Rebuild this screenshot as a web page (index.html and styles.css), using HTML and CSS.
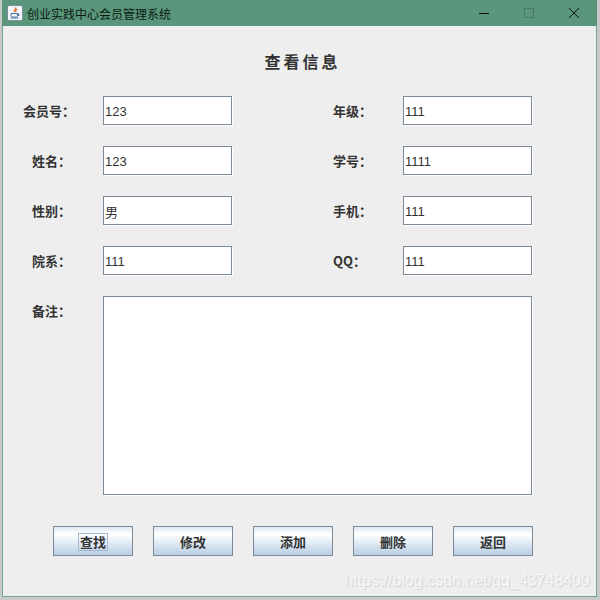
FILE: index.html
```html
<!DOCTYPE html>
<html lang="zh-CN">
<head>
  <meta charset="UTF-8" />
  <title>创业实践中心会员管理系统</title>
  <link rel="stylesheet" href="styles.css">
</head>
<body>
  <div class="window">
    <div class="titlebar">
      <svg class="app-icon" width="16" height="16" viewBox="0 0 16 16">
        <rect x="0.5" y="0.5" width="15" height="15" rx="1.5" fill="#f2f5fa" stroke="#7d8ea3"/>
        <path d="M8.500 2.500c1 1.500-2 2.500-1 4.500M10 4c-1 1-2 1.500-1 3" fill="none" stroke="#e2691f" stroke-width="1.200"/>
        <path d="M4 8.500h6.500v2c0 1-1 1.500-2 1.500h-2.500c-1 0-2-.5-2-1.500zM10.500 9h1.500v1.500h-1.500M3.500 13h8" fill="none" stroke="#4a6f9c"/>
      </svg>
      <span class="title-text">创业实践中心会员管理系统</span>
      <div class="win-btns">
        <svg width="12" height="12" viewBox="0 0 12 12"><path d="M1 6.500h10" stroke="#111"/></svg>
        <svg width="12" height="12" viewBox="0 0 12 12"><rect x="1.500" y="1.500" width="9" height="9" fill="none" stroke="#467a62"/></svg>
        <svg width="12" height="12" viewBox="0 0 12 12"><path d="M1 1l10 10M11 1l-10 10" stroke="#111"/></svg>
      </div>
    </div>

    <h1 class="heading">查看信息</h1>

    <div class="form-grid">
      <label class="lbl wide">会员号：</label>
      <input class="field" value="123">
      <label class="lbl right">年级：</label>
      <input class="field" value="111">

      <label class="lbl">姓名：</label>
      <input class="field" value="123">
      <label class="lbl right">学号：</label>
      <input class="field" value="1111">

      <label class="lbl">性别：</label>
      <input class="field" value="男">
      <label class="lbl right">手机：</label>
      <input class="field" value="111">

      <label class="lbl">院系：</label>
      <input class="field" value="111">
      <label class="lbl right">QQ：</label>
      <input class="field" value="111">

      <label class="lbl">备注：</label>
      <textarea class="field notes"></textarea>
    </div>

    <div class="actions">
      <button class="btn"><span class="focus">查找</span></button>
      <button class="btn"><span>修改</span></button>
      <button class="btn"><span>添加</span></button>
      <button class="btn"><span>删除</span></button>
      <button class="btn"><span>返回</span></button>
    </div>

    <div class="watermark">https://blog.csdn.net/qq_43748400</div>
  </div>
</body>
</html>
```

FILE: styles.css
```css
html, body   {margin:0; height:100%;}
body         {background:#c9c9c9; font-family:"Liberation Sans", "Noto Sans CJK SC", sans-serif; overflow:hidden;}

.window      {position:relative; box-sizing:border-box; width:595px; height:597px; margin-left:2px; background:#eeeeee; border:solid #6fa88f; border-width:0 1px 1px 1px;}

.titlebar    {display:flex; align-items:center; height:26px; margin:0 -1px; background:#5a967b;}
.app-icon    {margin-left:5px; margin-right:4px; flex:none;}
.title-text  {font-size:12px; color:#0a1a12;}
.win-btns    {display:flex; gap:33px; margin-left:auto; margin-right:17px;}

.heading     {margin:0; height:70px; padding-left:6px; line-height:70px; text-align:center; font-size:16px; font-weight:bold; letter-spacing:3px; color:#333; font-family:"Noto Sans CJK SC", serif;}

.form-grid   {display:grid; grid-template-columns:100px 129px 171px 129px; grid-template-rows:repeat(4, 29px) 199px; row-gap:21px;}
.lbl         {padding-left:29px; font-size:13px; font-weight:bold; line-height:29px; white-space:nowrap; color:#333; font-family:"Noto Sans CJK TC", sans-serif;}
.lbl.wide    {padding-left:20px;}
.lbl.right   {padding-left:101px;}

.field       {box-sizing:border-box; width:100%; height:100%; margin:0; padding:2px 2px 0 1px; background:#fff; border:1px solid #7a8a99; border-radius:0; box-shadow:1px 1px 0 #fff; outline:none; font:13px "Liberation Sans", "Noto Sans CJK SC", sans-serif; color:#333;}
.notes       {grid-column:2 / 5; resize:none;}

.actions     {display:flex; gap:20px; margin-top:31px; padding-left:50px;}
.btn         {box-sizing:border-box; width:80px; height:30px; padding:0; background:linear-gradient(#dde8f3, #fff 25%, #b8cfe5); border:1px solid #7a8a99; border-radius:0; font-size:13px; font-weight:bold; color:#333; font-family:"Noto Sans CJK SC", sans-serif;}
.focus       {display:inline-block; padding:0 1px; line-height:16px; border:1px solid #a3b8cc;}

.watermark   {position:absolute; right:6px; bottom:6px; font-size:16px; color:#f6f6f6; text-shadow:1px 1px 1px #cfcfcf;}
```
